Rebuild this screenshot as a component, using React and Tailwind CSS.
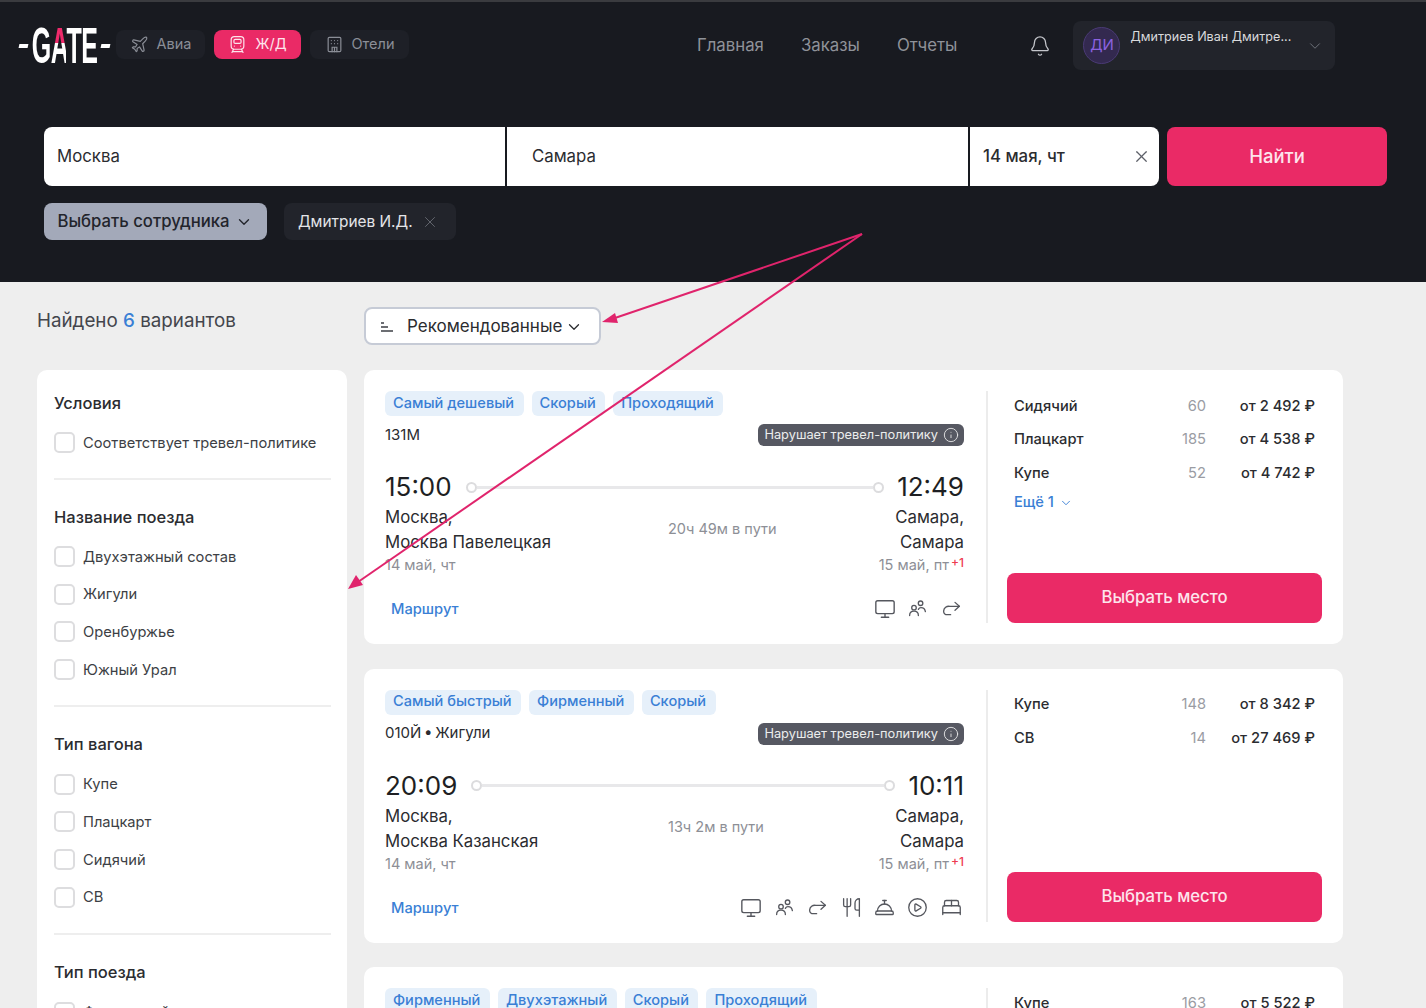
import React from 'react';
import {
  Plane, Bell, ChevronDown, X, Info, Monitor,
  Utensils, ConciergeBell, CirclePlay, BedDouble
} from 'lucide-react';

function PeopleIcon(props) {
  return (
    <svg viewBox="0 0 24 24" fill="none" stroke="currentColor" strokeWidth="1.6" strokeLinecap="round" {...props}>
      <circle cx="15.5" cy="6" r="2.6" />
      <circle cx="8" cy="11" r="2.6" />
      <path d="M3 20c0-3 2-5 5-5s5 2 5 5" />
      <path d="M13 13c.6-1.3 1.5-2 3-2 2.500 0 4.500 1.600 5 4.500" />
    </svg>
  );
}

function ForwardIcon(props) {
  return (
    <svg viewBox="0 0 24 24" fill="none" stroke="currentColor" strokeWidth="1.6" strokeLinecap="round" strokeLinejoin="round" {...props}>
      <path d="M16 5l5 4.500-5 4.500" />
      <path d="M21 9.500H10a6 6 0 0 0-7 5.500c0 2.500 2 4 4.500 4H11" />
    </svg>
  );
}

function TrainIcon(props) {
  return (
    <svg viewBox="0 0 24 24" fill="none" stroke="currentColor" strokeWidth="1.6" strokeLinecap="round" {...props}>
      <rect x="4" y="2" width="16" height="16" rx="4" />
      <rect x="7.500" y="5.500" width="9" height="5" rx="1.500" />
      <path d="M8 14h.01M16 14h.01M7 18l-2 4M17 18l2 4M6 21h12" />
    </svg>
  );
}

function HotelIcon(props) {
  return (
    <svg viewBox="0 0 24 24" fill="none" stroke="currentColor" strokeWidth="1.5" strokeLinecap="round" {...props}>
      <rect x="4" y="3" width="16" height="18" rx="1.500" />
      <path d="M8 7h.01M12 7h.01M16 7h.01M8 11h.01M12 11h.01M16 11h.01M9 21v-5.500h6V21M12 15.500V21" />
    </svg>
  );
}

const ICONS = { monitor: Monitor, users: PeopleIcon, forward: ForwardIcon, food: Utensils, bell: ConciergeBell, play: CirclePlay, bed: BedDouble };

const FILTERS = [
  { title: 'Условия', items: ['Соответствует тревел-политике'] },
  { title: 'Название поезда', items: ['Двухэтажный состав', 'Жигули', 'Оренбуржье', 'Южный Урал'] },
  { title: 'Тип вагона', items: ['Купе', 'Плацкарт', 'Сидячий', 'СВ'] },
  { title: 'Тип поезда', items: ['Фирменный', 'Скорый'] },
];

const TRAINS = [
  {
    tags: ['Самый дешевый', 'Скорый', 'Проходящий'],
    name: '131М',
    dep: '15:00',
    arr: '12:49',
    station: 'Москва Павелецкая',
    duration: '20ч 49м в пути',
    icons: ['monitor', 'users', 'forward'],
    seats: [['Сидячий', '60', 'от 2 492 ₽'], ['Плацкарт', '185', 'от 4 538 ₽'], ['Купе', '52', 'от 4 742 ₽']],
    more: true,
  },
  {
    tags: ['Самый быстрый', 'Фирменный', 'Скорый'],
    name: '010Й • Жигули',
    dep: '20:09',
    arr: '10:11',
    station: 'Москва Казанская',
    duration: '13ч 2м в пути',
    icons: ['monitor', 'users', 'forward', 'food', 'bell', 'play', 'bed'],
    seats: [['Купе', '148', 'от 8 342 ₽'], ['СВ', '14', 'от 27 469 ₽']],
  },
  {
    tags: ['Фирменный', 'Двухэтажный', 'Скорый', 'Проходящий'],
    name: '',
    dep: '',
    seats: [['Купе', '163', 'от 5 522 ₽']],
  },
];

function Logo() {
  return (
    <div className="w-[92px] h-[36px] flex items-center justify-between shrink-0 pl-[1px]">
      <span className="w-[9px] h-[4px] bg-white -skew-x-12"></span>
      <div className="w-[66px] flex justify-center">
        <span className="shrink-0 text-white font-bold text-[50px] leading-[36px] tracking-[-1px] scale-x-[0.5] whitespace-nowrap font-['Liberation_Sans',sans-serif]">
          G<span className="bg-gradient-to-b from-[#ee2a6b] from-45% to-white to-45% bg-clip-text text-transparent">A</span>TE
        </span>
      </div>
      <span className="w-[9px] h-[4px] bg-white -skew-x-12"></span>
    </div>
  );
}

function Tab({ icon: Icon, label, active, className }) {
  return (
    <div className={`h-[29px] rounded-[8px] flex items-center justify-center gap-[8px] text-[14.5px] ${active ? 'bg-[#ea2a66] text-[#fde4ec]' : 'bg-[#1e2027] text-[#8b8e97]'} ${className}`}>
      <Icon width={19} height={19} strokeWidth={1.5} />
      {label}
    </div>
  );
}

function Header() {
  return (
    <header className="bg-[#181a20] h-[282px] border-t-2 border-[#3a3b3f] shrink-0">
      <div className="h-[89px] flex items-center pl-[18px] pb-[2px]">
        <Logo />
        <div className="flex gap-[9px] ml-[6px] -mt-[3px]">
          <Tab icon={Plane} label="Авиа" className="w-[89px]" />
          <Tab icon={TrainIcon} label="Ж/Д" active className="w-[87px]" />
          <Tab icon={HotelIcon} label="Отели" className="w-[99px]" />
        </div>
        <nav className="flex gap-[37px] ml-[288px] text-[16.8px] text-[#8f9299]">
          <span>Главная</span>
          <span>Заказы</span>
          <span>Отчеты</span>
        </nav>
        <Bell size={22} strokeWidth={1.4} className="ml-[72px] text-[#c4c6cb]" />
        <div className="ml-[22px] w-[262px] h-[49px] rounded-[8px] bg-[#22242b] flex items-center pl-[14px] pr-[11px]">
          <div className="w-[29px] h-[37px] flex items-center justify-center">
            <div className="w-[37px] h-[37px] shrink-0 rounded-full bg-[#33294f] border border-[#4a3a75] flex items-center justify-center text-[15px] text-[#8b62e0]">ДИ</div>
          </div>
          <span className="ml-[14px] -mt-[16px] text-[12.6px] text-[#d9dadd] whitespace-nowrap flex-1">Дмитриев Иван Дмитре...</span>
          <ChevronDown size={18} strokeWidth={1.3} className="text-[#6f727a]" />
        </div>
      </div>

      <div className="flex ml-[44px] mr-[39px] mt-[36px] h-[59px]">
        <div className="w-[461px] bg-white rounded-l-[8px] pl-[13px] pt-[1px] flex items-center text-[16.8px] text-[#2b2c30]">Москва</div>
        <div className="w-[461px] ml-[2px] bg-white pl-[25px] pt-[1px] flex items-center text-[16.8px] text-[#2b2c30]">Самара</div>
        <div className="w-[189px] ml-[2px] bg-white rounded-r-[8px] pl-[13px] pr-[8px] flex items-center justify-between text-[16.8px] font-medium text-[#2b2c30]">
          14 мая, чт
          <X size={19} strokeWidth={1.5} className="text-[#5d6068]" />
        </div>
        <button className="w-[220px] ml-[8px] bg-[#ea2a66] rounded-[8px] text-[18.5px] font-medium text-[#fde4ec]">Найти</button>
      </div>

      <div className="flex ml-[44px] mt-[17px] gap-[17px] h-[37px]">
        <button className="w-[223px] rounded-[8px] bg-[#a3a9b9] flex items-center justify-center gap-[5px] pr-[1px] text-[16.7px] font-medium text-[#22242b]">
          Выбрать сотрудника
          <ChevronDown size={18} strokeWidth={1.8} />
        </button>
        <div className="w-[172px] rounded-[8px] bg-[#22242b] flex items-center pl-[14px] gap-[8px] text-[15.4px] text-[#e4e5e8]">
          Дмитриев И.Д.
          <X size={18} strokeWidth={1.3} className="text-[#63666e]" />
        </div>
      </div>
    </header>
  );
}

function Filters() {
  return (
    <aside className="w-[310px] shrink-0 bg-white rounded-[10px] pl-[17px] pr-[16px] pt-[21px] pb-[40px]">
      {FILTERS.map((group, i) => (
        <div key={group.title} className={i > 0 ? 'border-t-2 border-[#eeeeee] mt-[16px] pt-[25px] pb-[1px]' : ''}>
          <h3 className="text-[16.5px] leading-[24px] font-medium text-[#2b2c30] mb-[9px]">{group.title}</h3>
          {group.items.map((item) => (
            <label key={item} className="h-[37.7px] flex items-center gap-[8px] text-[14.7px] text-[#3d3f45] whitespace-nowrap">
              <span className="w-[21px] h-[21px] rounded-[5px] border-2 border-[#dddddf] shrink-0"></span>
              {item}
            </label>
          ))}
        </div>
      ))}
    </aside>
  );
}

function TrainCard({ train }) {
  return (
    <article className="h-[274px] shrink-0 bg-white rounded-[10px] p-[21px] flex">
      <div className="w-[579px] shrink-0 flex flex-col">
        <div className="flex gap-[8px] h-[25px]">
          {train.tags.map((tag) => (
            <span key={tag} className="pl-[8px] pr-[9.500px] rounded-[6px] bg-[#e6f0fa] text-[#3a7fd5] text-[14.6px] font-medium flex items-center">{tag}</span>
          ))}
        </div>
        {train.dep && (
          <>
            <div className="flex justify-between items-center mt-[8px] h-[22px]">
              <span className="text-[15px] text-[#2b2c30] [word-spacing:-1.500px]">{train.name}</span>
              <span className="h-[22px] rounded-[6px] bg-[#565862] text-[#eceded] text-[12.8px] pl-[6px] pr-[5px] flex items-center gap-[5px]">
                Нарушает тревел-политику
                <Info size={16} strokeWidth={1.3} />
              </span>
            </div>
            <div className="flex items-center gap-[13px] mt-[25px] h-[32px]">
              <span className="text-[26px] leading-[32px] text-[#1e1f23]">{train.dep}</span>
              <span className="w-[11px] h-[11px] ml-[1px] rounded-full border-2 border-[#dcdcde] shrink-0"></span>
              <span className="flex-1 h-[3px] -mx-[13px] bg-[#e8e8ea]"></span>
              <span className="w-[11px] h-[11px] rounded-full border-2 border-[#dcdcde] shrink-0"></span>
              <span className="text-[26px] leading-[32px] text-[#1e1f23]">{train.arr}</span>
            </div>
            <div className="flex mt-[2px]">
              <div className="w-[283px] text-[16.8px] leading-[25px] text-[#2b2c30]">
                <div>Москва,</div>
                <div>{train.station}</div>
                <div className="text-[14.5px] leading-[20px] text-[#8d8f96]">14 май, чт</div>
              </div>
              <div className="flex-1 flex items-center pb-[23px] text-[14.5px] text-[#8d8f96]">{train.duration}</div>
              <div className="text-right text-[16.8px] leading-[25px] text-[#2b2c30]">
                <div>Самара,</div>
                <div>Самара</div>
                <div className="text-[14.5px] leading-[20px] text-[#8d8f96]">
                  15 май, пт <sup className="-ml-[2px] -top-[3px] text-[#ee3b4f] text-[12px] font-medium">+1</sup>
                </div>
              </div>
            </div>
            <div className="flex items-center justify-between mt-auto h-[24px] pl-[6px] -mr-[4px] mb-[2px]">
              <span className="text-[14.7px] font-medium text-[#3a7fd5]">Маршрут</span>
              <div className="flex text-[#55575e]">
                {train.icons.map((name) => {
                  const Icon = ICONS[name];
                  return (
                    <span key={name} className="w-[33.4px] flex justify-center">
                      <Icon width={name === 'monitor' ? 22 : 21} height={name === 'monitor' ? 22 : 21} strokeWidth={1.5} />
                    </span>
                  );
                })}
              </div>
            </div>
          </>
        )}
      </div>
      <div className="w-[336px] ml-[22px] border-l-2 border-[#ececec] pl-[19px] flex flex-col">
        <div className="px-[7px] -mt-[2px]">
          {train.seats.map(([name, count, price]) => (
            <div key={name} className="h-[33.5px] flex items-center text-[14.7px] font-medium text-[#2b2c30]">
              <span className="flex-1">{name}</span>
              <span className="font-normal text-[#9a9ca3]">{count}</span>
              <span className="w-[109px] text-right">{price}</span>
            </div>
          ))}
          {train.more && (
            <div className="flex items-center gap-[5px] text-[14.7px] font-medium text-[#3a7fd5] h-[26px]">
              Ещё 1
              <ChevronDown size={14} strokeWidth={1.6} />
            </div>
          )}
        </div>
        <button className="mt-auto h-[50px] rounded-[8px] bg-[#ea2a66] text-[16.7px] font-medium text-[#fde4ec]">Выбрать место</button>
      </div>
    </article>
  );
}

function Arrows() {
  return (
    <svg className="absolute left-0 top-0 pointer-events-none" width="1426" height="1008" fill="none">
      <path d="M862 234 L612 319" stroke="#e0246c" strokeWidth="2" />
      <path d="M602 322 L615 313 L618 323 Z" fill="#e0246c" />
      <path d="M862 234 L358 582" stroke="#e0246c" strokeWidth="2" />
      <path d="M348 589 L356 575 L363 585 Z" fill="#e0246c" />
    </svg>
  );
}

export default function App() {
  return (
    <div className="relative h-[1008px] overflow-hidden bg-[#eeeeee] font-['Inter',sans-serif]">
      <Header />
      <div className="pl-[37px] pr-[83px]">
        <div className="flex h-[88px] items-start">
          <div className="w-[327px] pt-[25px] text-[18.8px] leading-[28px] text-[#43454c]">
            Найдено <span className="text-[#3a7fd5] font-medium">6</span> вариантов
          </div>
          <button className="mt-[25px] w-[237px] h-[38px] rounded-[8px] bg-white border-2 border-[#c6cbd6] flex items-center pl-[14px] pt-[1px] gap-[13px] text-[17px] text-[#2b2c30]">
            <svg width="14" height="12" viewBox="0 0 14 12" fill="none" stroke="#3d3f45" strokeWidth="1.3">
              <path d="M1 2h3M1 6h7M1 10h12" />
            </svg>
            Рекомендованные
            <ChevronDown size={18} strokeWidth={1.7} className="-ml-[10px]" />
          </button>
        </div>
        <div className="flex gap-[17px] items-start">
          <Filters />
          <div className="w-[979px] flex flex-col gap-[24.6px]">
            {TRAINS.map((train) => (
              <TrainCard key={train.dep + train.tags[0]} train={train} />
            ))}
          </div>
        </div>
      </div>
      <Arrows />
    </div>
  );
}
